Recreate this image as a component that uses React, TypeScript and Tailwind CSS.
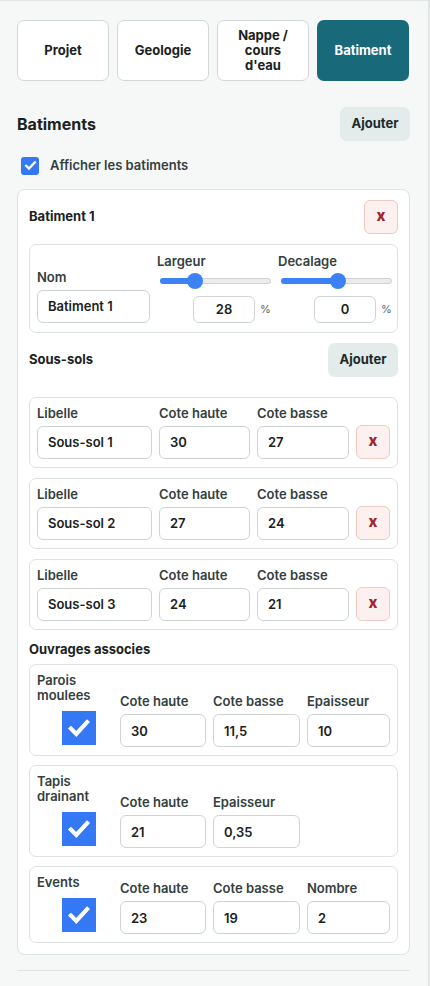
import { useState } from "react";

const tabs = ["Projet", "Geologie", "Nappe / cours d'eau", "Batiment"];

const sousSols = [
	{ libelle: "Sous-sol 1", haute: "30", basse: "27" },
	{ libelle: "Sous-sol 2", haute: "27", basse: "24" },
	{ libelle: "Sous-sol 3", haute: "24", basse: "21" },
];

type Champ = { label: string; value: string; w: string };

const ouvrages: { nom: string[]; champs: Champ[] }[] = [
	{
		nom: ["Parois", "moulees"],
		champs: [
			{ label: "Cote haute", value: "30", w: "w-[86px]" },
			{ label: "Cote basse", value: "11,5", w: "w-[87px]" },
			{ label: "Epaisseur", value: "10", w: "w-[83px]" },
		],
	},
	{
		nom: ["Tapis", "drainant"],
		champs: [
			{ label: "Cote haute", value: "21", w: "w-[86px]" },
			{ label: "Epaisseur", value: "0,35", w: "w-[87px]" },
		],
	},
	{
		nom: ["Events"],
		champs: [
			{ label: "Cote haute", value: "23", w: "w-[86px]" },
			{ label: "Cote basse", value: "19", w: "w-[87px]" },
			{ label: "Nombre", value: "2", w: "w-[83px]" },
		],
	},
];

const inputCls =
	"block rounded-[6px] border border-[#cdd4d3] bg-white px-[10px] text-[13px] font-semibold text-[#1b2222] outline-none";

function Label({ children }: { children: React.ReactNode }) {
	return (
		<div className="h-[18px] text-[13px] leading-[18px] font-semibold text-[#33403e]">
			{children}
		</div>
	);
}

function DeleteButton() {
	return (
		<button
			type="button"
			className="flex h-[34px] w-[34px] shrink-0 items-center justify-center rounded-[6px] border border-[#efc9c4] bg-[#fdf1f0] text-[15px] font-extrabold text-[#a3242a]"
		>
			x
		</button>
	);
}

function Slider({ pos }: { pos: number }) {
	// pos: 0..1, thumb travels inside the track
	const left = 8 + pos * 95;
	return (
		<div className="relative h-[16px] w-[111px]">
			<div className="absolute top-[5px] left-0 h-[6px] w-full rounded-full border border-[#cfd3d3] bg-[#ececec]" />
			<div
				className="absolute top-[5px] left-0 h-[6px] rounded-full bg-[#3b82f6]"
				style={{ width: left }}
			/>
			<div
				className="absolute top-0 h-[16px] w-[16px] -translate-x-1/2 rounded-full bg-[#3b82f6]"
				style={{ left }}
			/>
		</div>
	);
}

function BigCheck() {
	return (
		<div className="flex h-[34px] w-[34px] items-center justify-center bg-[#3478f6]">
			<svg viewBox="0 0 24 24" className="h-[26px] w-[26px]">
				<path
					d="M4.5 12.5l5 5L19.5 6.5"
					fill="none"
					stroke="white"
					strokeWidth={3.8}
					strokeLinecap="square"
				/>
			</svg>
		</div>
	);
}

export default function App() {
	const [afficher, setAfficher] = useState(true);

	return (
		<div
			className="min-h-[986px] w-[430px] border-t border-r-2 border-[#e1e6e5] bg-[#f6f8f8] text-[#1b2222]"
			style={{ fontFamily: "Inter, 'Noto Sans', sans-serif" }}
		>
			<div className="w-[428px] px-[17px] pt-[19px] pr-[18px]">
				{/* Onglets */}
				<div className="flex gap-[8px]">
					{tabs.map((t) => (
						<div
							key={t}
							className={
								t === "Batiment"
									? "flex h-[61px] w-[92px] items-center justify-center rounded-[7px] bg-[#186a7a] px-2 text-center text-[13px] leading-[15px] font-bold text-white"
									: "flex h-[61px] w-[92px] items-center justify-center rounded-[7px] border border-[#d2d8d7] bg-white px-3 text-center text-[13px] leading-[15px] font-bold text-[#1b2222]"
							}
						>
							{t}
						</div>
					))}
				</div>

				{/* Entete batiments */}
				<div className="mt-[26px] flex items-center justify-between">
					<h2 className="text-[16px] font-bold text-[#1b2222]">Batiments</h2>
					<button
						type="button"
						className="h-[34px] w-[70px] rounded-[7px] bg-[#e3ebeb] text-[13px] font-bold text-[#1b2a2a]"
					>
						Ajouter
					</button>
				</div>

				<label className="mt-[15px] flex items-center gap-[11px] pl-[4px]">
					<span
						onClick={() => setAfficher(!afficher)}
						className="flex h-[18px] w-[18px] items-center justify-center rounded-[3px] bg-[#3478f6]"
					>
						{afficher && (
							<svg viewBox="0 0 24 24" className="h-[15px] w-[15px]">
								<path
									d="M5 12.5l4.5 4.5L19 7"
									fill="none"
									stroke="white"
									strokeWidth={3.8}
									strokeLinecap="square"
								/>
							</svg>
						)}
					</span>
					<span className="text-[13px] font-semibold text-[#33403e]">
						Afficher les batiments
					</span>
				</label>

				{/* Carte batiment */}
				<div className="mt-[13px] rounded-[8px] border border-[#dde3e2] bg-white px-[11px] pt-[10px] pb-[11px]">
					<div className="flex items-center justify-between">
						<div className="text-[13px] font-bold text-[#1b2222]">Batiment 1</div>
						<DeleteButton />
					</div>

					<div className="mt-[10px] flex items-end gap-[7px] rounded-[7px] border border-[#dde3e2] px-[7px] pt-[7px] pb-[9px]">
						<div className="w-[113px]">
							<Label>Nom</Label>
							<input readOnly value="Batiment 1" className={`${inputCls} mt-[4px] h-[33px] w-[113px]`} />
						</div>
						<div className="w-[114px]">
							<Label>Largeur</Label>
							<div className="mt-[3px] pl-[3px]">
								<Slider pos={0.28} />
							</div>
							<div className="mt-[7px] flex items-center gap-[5px] pl-[36px]">
								<input readOnly value="28" className={`${inputCls} h-[27px] w-[62px] text-center`} />
								<span className="text-[11px] text-[#5c6666]">%</span>
							</div>
						</div>
						<div className="w-[114px]">
							<Label>Decalage</Label>
							<div className="mt-[3px] pl-[3px]">
								<Slider pos={0.52} />
							</div>
							<div className="mt-[7px] flex items-center gap-[5px] pl-[36px]">
								<input readOnly value="0" className={`${inputCls} h-[27px] w-[62px] text-center`} />
								<span className="text-[11px] text-[#5c6666]">%</span>
							</div>
						</div>
					</div>

					<div className="mt-[10px] flex items-center justify-between">
						<div className="text-[13px] font-bold text-[#1b2222]">Sous-sols</div>
						<button
							type="button"
							className="h-[34px] w-[70px] rounded-[7px] bg-[#e3ebeb] text-[13px] font-bold text-[#1b2a2a]"
						>
							Ajouter
						</button>
					</div>

					<div className="mt-[20px] flex flex-col gap-[10px]">
						{sousSols.map((s) => (
							<div
								key={s.libelle}
								className="flex items-end gap-[7px] rounded-[7px] border border-[#dde3e2] px-[7px] pt-[6px] pb-[8px]"
							>
								<div>
									<Label>Libelle</Label>
									<input readOnly value={s.libelle} className={`${inputCls} mt-[4px] h-[33px] w-[115px]`} />
								</div>
								<div>
									<Label>Cote haute</Label>
									<input readOnly value={s.haute} className={`${inputCls} mt-[4px] h-[33px] w-[91px]`} />
								</div>
								<div>
									<Label>Cote basse</Label>
									<input readOnly value={s.basse} className={`${inputCls} mt-[4px] h-[33px] w-[92px]`} />
								</div>
								<DeleteButton />
							</div>
						))}
					</div>

					<div className="mt-[10px] text-[13px] font-bold text-[#1b2222]">Ouvrages associes</div>

					<div className="mt-[5px] flex flex-col gap-[9px]">
						{ouvrages.map((o) => (
							<div
								key={o.nom.join(" ")}
								className="flex items-end rounded-[7px] border border-[#dde3e2] px-[7px] pt-[8px] pb-[8px]"
							>
								<div className="mb-[2px] flex w-[83px] flex-col self-stretch">
									<div className="text-[13px] leading-[15px] font-semibold text-[#33403e]">
										{o.nom.map((n) => (
											<div key={n}>{n}</div>
										))}
									</div>
									<div className="mt-auto flex justify-center pt-[8px]">
										<BigCheck />
									</div>
								</div>
								<div className="flex gap-[7px]">
									{o.champs.map((c) => (
										<div key={c.label}>
											<Label>{c.label}</Label>
											<input readOnly value={c.value} className={`${inputCls} mt-[4px] h-[33px] ${c.w}`} />
										</div>
									))}
								</div>
							</div>
						))}
					</div>
				</div>

				<div className="mt-[15px] h-px bg-[#dde3e2]" />
			</div>
		</div>
	);
}
